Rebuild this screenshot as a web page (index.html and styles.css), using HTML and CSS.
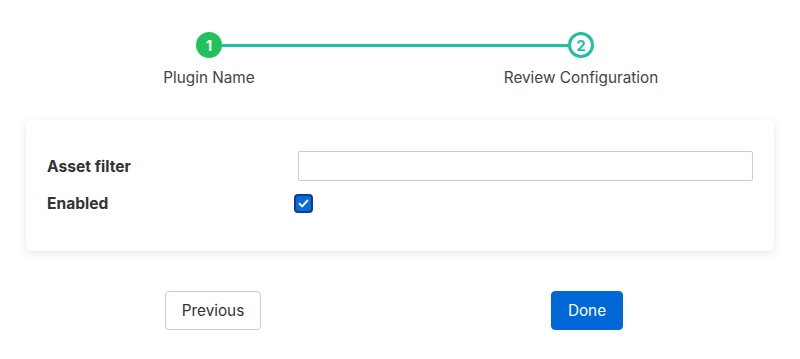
FILE: index.html
```html
<!DOCTYPE html>
<html>
<head>
    <title>Add Plugin</title>
    <link rel="stylesheet" href="styles.css">
</head>
<body>
    <div class="wizard">
        <div class="steps">
            <div class="step">
                <span class="step-num done">1</span>
                <span class="step-label">Plugin Name</span>
            </div>
            <div class="connector"></div>
            <div class="step">
                <span class="step-num current">2</span>
                <span class="step-label">Review Configuration</span>
            </div>
        </div>

        <div class="card">
            <div class="form-row">
                <label for="assetFilter">Asset filter</label>
                <input type="text" id="assetFilter">
            </div>
            <div class="form-row">
                <label for="enabled">Enabled</label>
                <span class="check" id="enabled">
                    <svg width="19" height="19" viewBox="0 0 19 19">
                        <rect x="1" y="1" width="17" height="17" rx="3" fill="#0b6bd8" stroke="#0a3f8f" stroke-width="2"/>
                        <path d="M5.5 9.8 L8.2 12.4 L13.4 6.6" fill="none" stroke="#fff" stroke-width="2" stroke-linecap="round" stroke-linejoin="round"/>
                    </svg>
                </span>
            </div>
        </div>

        <div class="actions">
            <div class="action-cell">
                <button class="btn">Previous</button>
            </div>
            <div class="action-cell">
                <button class="btn btn-primary">Done</button>
            </div>
        </div>
    </div>
</body>
</html>
```

FILE: styles.css
```css
body {
    margin: 0;
    background-color: #fff;
    font-family: Inter, "Noto Sans", sans-serif;
    color: #333;
}

.wizard {
    padding: 32px 26px 0 26px;
}

.steps {
    display: flex;
    width: 398px;
    margin-left: 170px;
}

.step {
    width: 26px;
    display: flex;
    flex-direction: column;
    align-items: center;
}

.step-num {
    width: 26px;
    height: 26px;
    box-sizing: border-box;
    border-radius: 50%;
    display: flex;
    align-items: center;
    justify-content: center;
    font-size: 15px;
    font-weight: 700;
}

.step-num.done {
    background-color: #21c25c;
    color: #fff;
}

.step-num.current {
    border: 3px solid #1fbf9f;
    color: #1fbf9f;
    background-color: #fff;
}

.step-label {
    margin-top: 10px;
    white-space: nowrap;
    font-size: 15.3px;
    line-height: 20px;
    color: #444;
}

.connector {
    flex: 1;
    height: 3px;
    margin-top: 12px;
    background-color: #1fbf9f;
}

.card {
    margin-top: 32px;
    padding: 31px 21px 36px 21px;
    border-radius: 6px;
    background-color: #fff;
    box-shadow: 0 2px 10px rgba(0, 0, 0, 0.10);
}

.form-row {
    display: flex;
    align-items: center;
    margin-bottom: 10px;
}

.form-row:last-child {
    margin-bottom: 0;
}

.form-row label {
    width: 251px;
    flex-shrink: 0;
    font-size: 15.6px;
    font-weight: 700;
    color: #333;
}

input[type="text"] {
    flex: 1;
    height: 30px;
    box-sizing: border-box;
    border: 1px solid #ccc;
    border-radius: 2px;
    padding: 4px 8px;
    font-size: 15px;
}

.check {
    display: flex;
    height: 24px;
    align-items: center;
    margin-left: -4px;
}

.actions {
    display: flex;
    margin-top: 40px;
}

.action-cell {
    flex: 1;
    display: flex;
    justify-content: center;
}

.btn {
    height: 39px;
    padding: 0 16px;
    font-family: Inter, "Noto Sans", sans-serif;
    font-size: 15.3px;
    color: #333;
    background-color: #fff;
    border: 1px solid #ccc;
    border-radius: 4px;
    cursor: pointer;
}

.btn-primary {
    background-color: #0068d6;
    border-color: #0068d6;
    color: #fff;
}
```
